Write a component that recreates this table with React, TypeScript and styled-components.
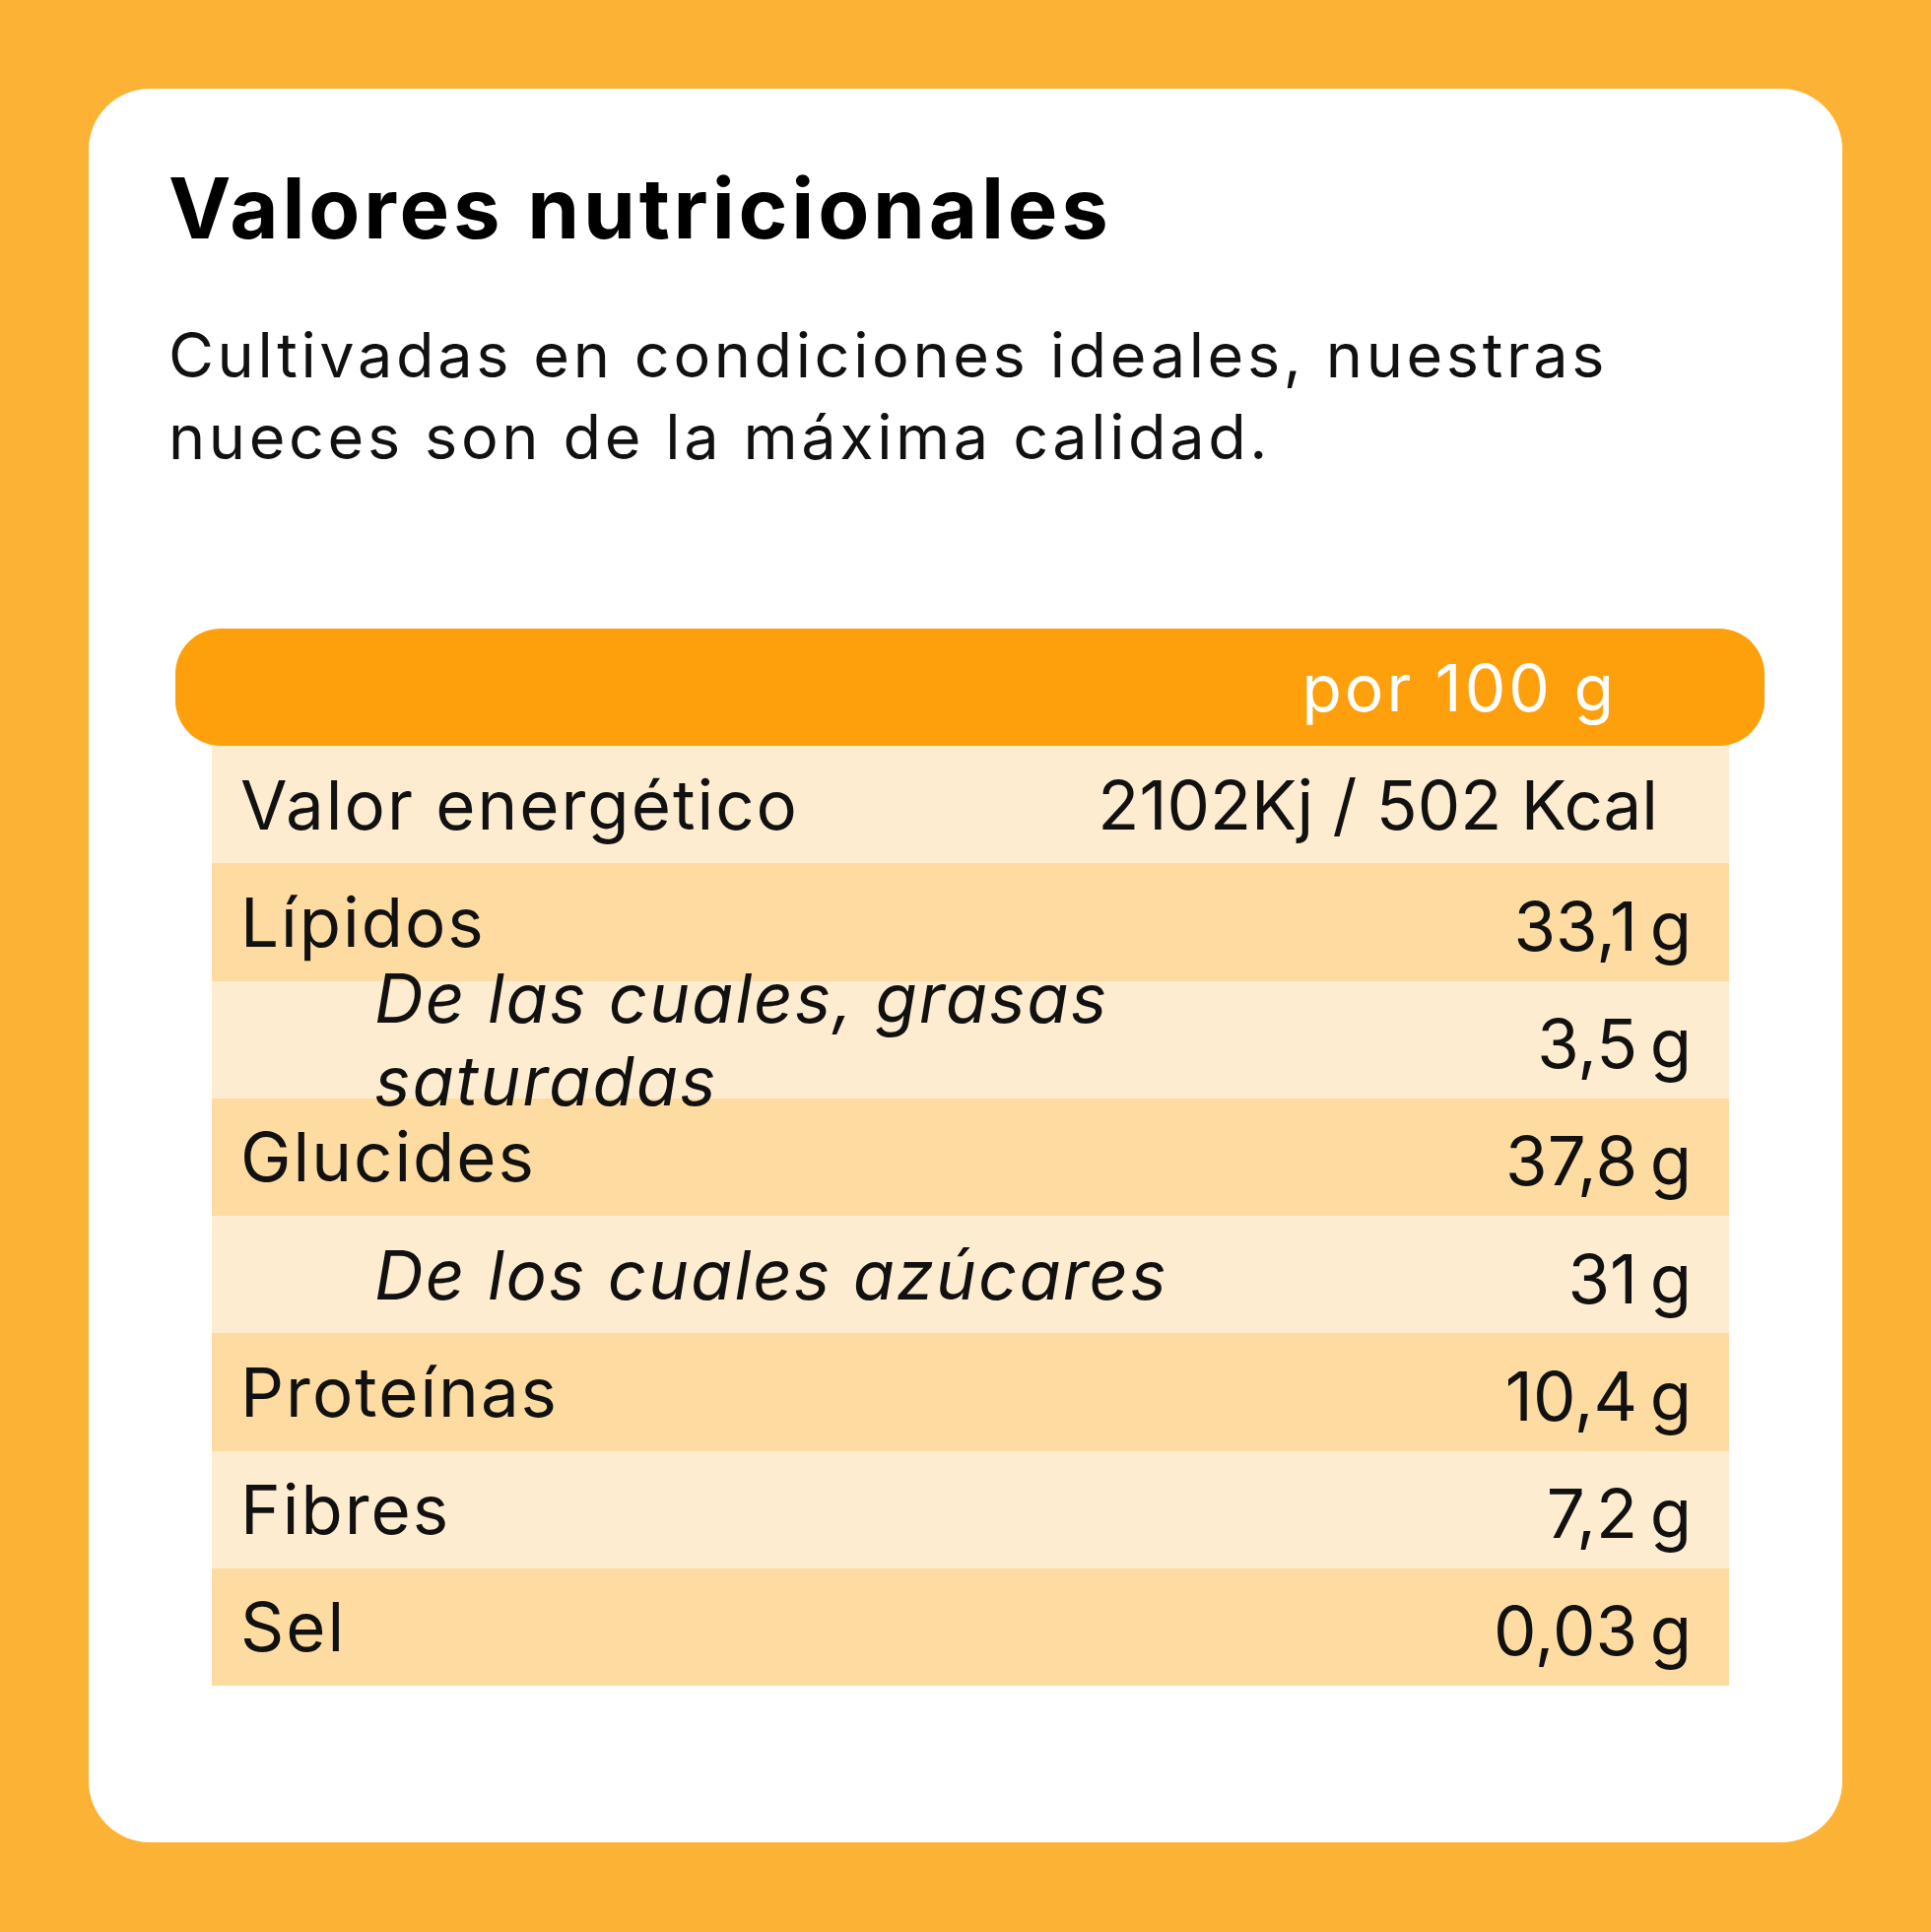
import React from "react";
import styled, { createGlobalStyle } from "styled-components";

const GlobalStyle = createGlobalStyle`
  html, body {
    margin: 0;
    padding: 0;
  }
  body {
    background: #fcb234;
    font-family: "Inter", "Open Sans", sans-serif;
    color: #111;
  }
`;

const Page = styled.div`
  width: 1960px;
  min-height: 1961px;
  box-sizing: border-box;
  padding: 90px;
  background: #fcb234;
`;

const Card = styled.section`
  width: 1780px;
  height: 1780px;
  box-sizing: border-box;
  background: #ffffff;
  border-radius: 62px;
  padding: 79px 0 0 81px;
  display: flex;
  flex-direction: column;
`;

const Title = styled.h1`
  margin: 0;
  font-family: "Inter", sans-serif;
  font-weight: 700;
  font-size: 85px;
  line-height: 85px;
  color: #000;
  letter-spacing: 3.8px;
`;

const Intro = styled.p`
  margin: 65px 0 0;
  font-family: "Inter", sans-serif;
  font-weight: 400;
  font-size: 63px;
  line-height: 83px;
  letter-spacing: 3.6px;
  color: #111;
`;

const HeaderBar = styled.div`
  margin: 153px 0 0 7px;
  width: 1613px;
  height: 119px;
  box-sizing: border-box;
  background: #fda00c;
  border-radius: 46px;
  display: flex;
  align-items: center;
  justify-content: flex-end;
  padding-right: 150px;
`;

const HeaderText = styled.span`
  font-family: "Inter", sans-serif;
  font-size: 66px;
  letter-spacing: 3px;
  color: #ffffff;
`;

const Table = styled.div`
  margin-left: 44px;
  width: 1540px;
`;

const Row = styled.div<{ $tone: "light" | "dark" }>`
  height: 119.25px;
  display: flex;
  align-items: center;
  justify-content: space-between;
  background: ${(p) => (p.$tone === "light" ? "#feecd0" : "#fedca1")};
`;

const Label = styled.div<{ $sub?: boolean }>`
  position: relative;
  z-index: 1;
  flex: 0 0 auto;
  box-sizing: border-box;
  padding-left: ${(p) => (p.$sub ? 165 : 29)}px;
  font-size: 69px;
  line-height: 84px;
  letter-spacing: 2px;
  font-style: ${(p) => (p.$sub ? "italic" : "normal")};
  color: #111;
  max-width: ${(p) => (p.$sub ? "1010px" : "none")};
`;

const Value = styled.div<{ $wide?: boolean }>`
  padding-right: ${(p) => (p.$wide ? 72 : 38)}px;
  font-size: 69px;
  line-height: 84px;
  padding-top: ${(p) => (p.$wide ? 0 : 8)}px;
  text-align: right;
  color: #111;
  white-space: nowrap;
`;

type Item = {
  label: string;
  value: string;
  sub?: boolean;
  wide?: boolean;
};

const items: Item[] = [
  { label: "Valor energético", value: "2102Kj / 502 Kcal", wide: true },
  { label: "Lípidos", value: "33,1\u2009g" },
  { label: "De las cuales, grasas saturadas", value: "3,5\u2009g", sub: true },
  { label: "Glucides", value: "37,8\u2009g" },
  { label: "De los cuales azúcares", value: "31\u2009g", sub: true },
  { label: "Proteínas", value: "10,4\u2009g" },
  { label: "Fibres", value: "7,2\u2009g" },
  { label: "Sel", value: "0,03\u2009g" },
];

export default function App() {
  return (
    <>
      <GlobalStyle />
      <Page>
        <Card>
          <Title>Valores nutricionales</Title>
          <Intro>
            Cultivadas en condiciones ideales, nuestras
            <br />
            nueces son de la máxima calidad.
          </Intro>
          <HeaderBar>
            <HeaderText>por 100 g</HeaderText>
          </HeaderBar>
          <Table>
            {items.map((it, i) => (
              <Row key={it.label} $tone={i % 2 === 0 ? "light" : "dark"}>
                <Label $sub={it.sub}>{it.label}</Label>
                <Value $wide={it.wide}>{it.value}</Value>
              </Row>
            ))}
          </Table>
        </Card>
      </Page>
    </>
  );
}
